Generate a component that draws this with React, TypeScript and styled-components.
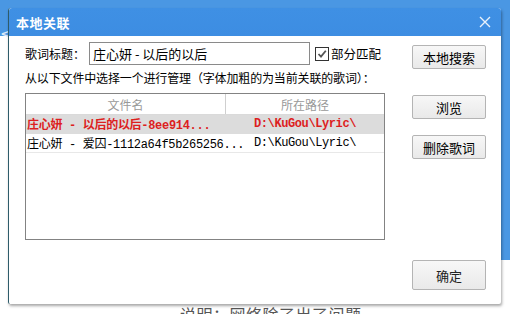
import React from 'react';
import styled, { createGlobalStyle } from 'styled-components';

const GlobalStyle = createGlobalStyle`
  html, body {
    margin: 0;
    padding: 0;
  }
  body {
    font-family: "Noto Sans CJK SC", "Liberation Sans", sans-serif;
    font-size: 12px;
    color: #000;
  }
`;

const Page = styled.div`
  width: 510px;
  height: 314px;
  overflow: hidden;
  position: relative;
  background:
    linear-gradient(#4a97e3, #4a97e3) top left / 100% 36px no-repeat,
    linear-gradient(#4a97e3, #4a97e3) top right / 10px 260px no-repeat,
    #fff;
  padding: 8px 0 0 8px;
  box-sizing: border-box;
`;

const BackArrow = styled.div`
  position: absolute;
  left: 0;
  top: 26px;
  color: #dbe9f8;
  font-family: "DejaVu Sans", sans-serif;
  font-size: 16px;
  line-height: 16px;
`;

const Dialog = styled.div`
  width: 492px;
  height: 296px;
  display: flex;
  flex-direction: column;
  background: #fff;
  border-left: 1px solid #2e5c6a;
  border-radius: 3px 3px 2px 2px;
  box-shadow: 1px 2px 3px rgba(0, 0, 0, 0.35);
  position: relative;
  z-index: 1;
`;

const TitleBar = styled.div`
  height: 28px;
  flex: none;
  display: flex;
  align-items: center;
  justify-content: space-between;
  padding: 0 10px 0 7px;
  background: linear-gradient(#3f90e4, #3d8de2);
  border-radius: 3px 3px 0 0;
`;

const TitleText = styled.span`
  color: #fff;
  font-weight: bold;
  font-size: 13px;
  letter-spacing: 0.5px;
`;

const Body = styled.div`
  flex: 1;
  display: flex;
  padding: 0 15px 14px 15px;
`;

const LeftCol = styled.div`
  width: 372px;
  display: flex;
  flex-direction: column;
  padding-top: 6px;
`;

const RightCol = styled.div`
  margin-left: auto;
  width: 74px;
  display: flex;
  flex-direction: column;
  padding-top: 9px;
`;

const TitleRow = styled.div`
  display: flex;
  align-items: center;
  height: 23px;
  white-space: nowrap;
`;

const Label = styled.span`
  flex: none;
  font-size: 12px;
  width: 64px;
  padding-left: 1px;
`;

const TextInput = styled.div`
  flex: none;
  width: 216px;
  height: 21px;
  border: 1px solid #8a8a8a;
  display: flex;
  align-items: center;
  padding-left: 3px;
  font-size: 13px;
  box-sizing: content-box;
`;

const Check = styled.span`
  flex: none;
  margin-left: 5px;
  width: 12px;
  height: 12px;
  border: 1px solid #333;
  background: #fff;
  display: flex;
  align-items: center;
  justify-content: center;
`;

const CheckLabel = styled.span`
  flex: none;
  margin-left: 2px;
  font-size: 12.5px;
`;

const Hint = styled.div`
  margin-top: 5px;
  font-size: 12px;
  line-height: 16px;
  padding-left: 1px;
  letter-spacing: -0.15px;
  white-space: nowrap;
`;

const ListBox = styled.div`
  margin-top: 7px;
  height: 145px;
  width: 358px;
  margin-left: 1px;
  border: 1px solid #838383;
  display: flex;
  flex-direction: column;
`;

const HeaderRow = styled.div`
  display: grid;
  grid-template-columns: 200px 1fr;
  height: 20px;
  border-bottom: 1px solid #dadada;
  color: #999;
  font-size: 12px;
`;

const HeaderCell = styled.div<{ $divider?: boolean }>`
  display: flex;
  align-items: center;
  justify-content: center;
  border-right: ${p => (p.$divider ? '1px solid #cfcfcf' : 'none')};
`;

const Row = styled.div<{ $active?: boolean }>`
  display: grid;
  grid-template-columns: 200px 1fr;
  height: 18px;
  align-items: center;
  background: ${p => (p.$active ? '#dcdcdc' : '#fff')};
  color: ${p => (p.$active ? '#dd1f1f' : '#000')};
  font-weight: ${p => (p.$active ? 'bold' : 'normal')};
  border-bottom: 1px solid ${p => (p.$active ? '#dcdcdc' : '#e8e8e8')};
  font-family: "Liberation Mono", "Noto Sans CJK SC", monospace;
  font-size: 12px;
  white-space: nowrap;
`;

const NameCell = styled.span`
  padding-left: 1px;
  letter-spacing: -0.3px;
`;

const PathCell = styled.span`
  text-align: center;
  letter-spacing: -0.4px;
`;

const Button = styled.button<{ $gap?: number }>`
  width: 74px;
  height: 24px;
  margin-top: ${p => p.$gap ?? 0}px;
  border: 1px solid #b4b4b4;
  border-radius: 2px;
  background: linear-gradient(#f7f7f7, #e9e9e9);
  font-family: "Noto Sans CJK SC", sans-serif;
  font-size: 13px;
  color: #000;
  padding: 0;
`;

const OkButton = styled(Button)`
  margin-top: auto;
  height: 30px;
  color: #222;
`;

const Footer = styled.div`
  margin-left: 172px;
  font-size: 16px;
  line-height: 20px;
  color: #555;
  letter-spacing: 0.5px;
  white-space: nowrap;
`;

const CloseIcon = () => (
  <svg width="12" height="12" viewBox="0 0 12 12">
    <path d="M1 1L11 11M11 1L1 11" stroke="#e8f1fb" strokeWidth="1.4" />
  </svg>
);

const CheckMark = () => (
  <svg width="10" height="10" viewBox="0 0 10 10">
    <path d="M1.5 5L4 7.6L8.8 1.8" stroke="#555" strokeWidth="1.8" fill="none" />
  </svg>
);

const files = [
  { name: '庄心妍 - 以后的以后-8ee914...', path: 'D:\\KuGou\\Lyric\\', active: true },
  { name: '庄心妍 - 爱囚-1112a64f5b265256...', path: 'D:\\KuGou\\Lyric\\', active: false },
];

export default function App() {
  return (
    <>
      <GlobalStyle />
      <Page>
        <BackArrow>&lt;</BackArrow>
        <Dialog>
          <TitleBar>
            <TitleText>本地关联</TitleText>
            <CloseIcon />
          </TitleBar>
          <Body>
            <LeftCol>
              <TitleRow>
                <Label>歌词标题：</Label>
                <TextInput>庄心妍 - 以后的以后</TextInput>
                <Check>
                  <CheckMark />
                </Check>
                <CheckLabel>部分匹配</CheckLabel>
              </TitleRow>
              <Hint>从以下文件中选择一个进行管理（字体加粗的为当前关联的歌词）：</Hint>
              <ListBox>
                <HeaderRow>
                  <HeaderCell $divider>文件名</HeaderCell>
                  <HeaderCell>所在路径</HeaderCell>
                </HeaderRow>
                {files.map(f => (
                  <Row key={f.name} $active={f.active}>
                    <NameCell>{f.name}</NameCell>
                    <PathCell>{f.path}</PathCell>
                  </Row>
                ))}
              </ListBox>
            </LeftCol>
            <RightCol>
              <Button>本地搜索</Button>
              <Button $gap={26}>浏览</Button>
              <Button $gap={16}>删除歌词</Button>
              <OkButton>确定</OkButton>
            </RightCol>
          </Body>
        </Dialog>
        <Footer>说明：网络除了出了问题……</Footer>
      </Page>
    </>
  );
}
